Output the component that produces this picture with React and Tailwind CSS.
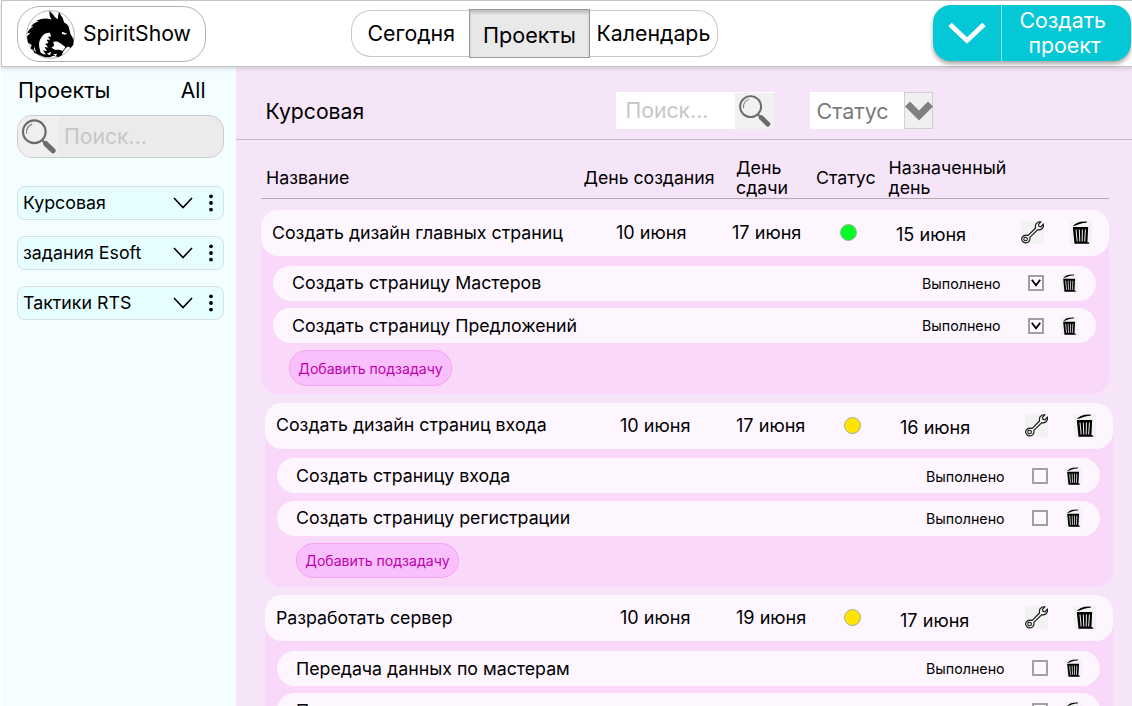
const projects = ["Курсовая", "задания Esoft", "Тактики RTS"];

const tasks = [
  {
    title: "Создать дизайн главных страниц",
    created: "10 июня",
    due: "17 июня",
    assigned: "15 июня",
    dot: "bg-[#00ff26]",
    shift: "ml-[25px]",
    addShift: "ml-[28px]",
    subtasks: [
      { title: "Создать страницу Мастеров", done: true },
      { title: "Создать страницу Предложений", done: true },
    ],
  },
  {
    title: "Создать дизайн страниц входа",
    created: "10 июня",
    due: "17 июня",
    assigned: "16 июня",
    dot: "bg-[#ffe500]",
    shift: "ml-[29px]",
    addShift: "ml-[31px]",
    subtasks: [
      { title: "Создать страницу входа", done: false },
      { title: "Создать страницу регистрации", done: false },
    ],
  },
  {
    title: "Разработать сервер",
    created: "10 июня",
    due: "19 июня",
    assigned: "17 июня",
    dot: "bg-[#ffe500]",
    shift: "ml-[29px]",
    addShift: "ml-[31px]",
    subtasks: [
      { title: "Передача данных по мастерам", done: false },
      { title: "Передача данных", done: false },
    ],
  },
];

function DragonLogo() {
  return (
    <svg viewBox="78 26 148 148" className="size-[49px] shrink-0">
      <circle cx="152" cy="100" r="72" fill="#fff" stroke="#8c8c8c" strokeWidth="2" />
      <path
        d="M84 124 L81 106 L92 94 L82 97 Q86 82 101 76 L93 76 Q103 63 118 61 L108 59 Q128 46 156 55 Q147 44 149 28 Q159 37 165 47 L174 54 Q174 42 178 31 Q182 42 189 50 L193 64 Q205 69 208 80 L212 98 L222 115 L221 131 L213 141 L206 136 L198 141 L190 152 L186 163 L176 168 L160 164 L150 169 L134 168 L118 162 L102 154 L100 146 L92 143 L95 132 Z"
        fill="#000"
      />
      <path
        d="M150 95 Q136 94 128 104 Q115 118 118 138 L122 154 L130 160 L138 160 L129 148 L141 150 L134 138 L145 139 L136 128 L146 126 L140 116 L151 116 L144 107 L154 106 Z"
        fill="#fff"
      />
      <path d="M160 122 L172 121 L184 128 L197 138 L189 150 L178 146 L165 146 L155 140 L163 133 Z" fill="#fff" />
      <path d="M141 158 L155 152 L150 163 Z M160 160 L172 158 L168 166 Z" fill="#fff" />
      <path d="M187 92 L203 98 L194 101 L186 97 Z" fill="#fff" />
      <path d="M103 136 Q100 148 108 154 L105 142 Z" fill="#fff" />
    </svg>
  );
}

function Magnifier({ className }) {
  return (
    <svg viewBox="0 0 39 37" className={className} fill="none">
      <circle cx="15.5" cy="14" r="10.8" stroke="#6b6b6b" strokeWidth="2" />
      <path d="M8.3 15.5 A7.8 7.8 0 0 1 13.5 6.6" stroke="#6b6b6b" strokeWidth="1" />
      <path d="M23 22 L27 26" stroke="#6b6b6b" strokeWidth="2" />
      <path d="M26.3 25.2 L33.3 32" stroke="#6b6b6b" strokeWidth="5" strokeLinecap="round" />
    </svg>
  );
}

function Wrench() {
  return (
    <svg viewBox="0 0 23 23" className="mb-px size-[23px] bg-[#f2f2f2]" fill="none" stroke="#111" strokeWidth="1.1">
      <path d="M7.2 14.4 L14.6 7 Q13.6 3 16.5 1.4 Q18.2 .4 19.8 .8 L17.4 3.4 L18 5.3 L20 5.8 L22.3 3.2 Q23 6 21 7.8 Q19 9.3 16.6 8.8 L8.8 16.4 Q9.6 19.8 7 21.3 Q4.4 22.7 2 20.8 Q-.3 18.5 1.4 15.9 Q3.5 13.3 7.2 14.4 Z" />
      <circle cx="4.6" cy="18" r="1.8" />
    </svg>
  );
}

function Trash({ className }) {
  return (
    <svg viewBox="0 0 22 23" className={className}>
      <rect width="22" height="23" fill="#f2f2f2" />
      <path d="M3 4.6 Q7 1 10.5 .7 L17 .4 L16.5 1.7 Q12 1.6 9 3.2 L4 5 Z" fill="#000" />
      <path d="M2.8 6 H18.2 L17.4 21.3 L19.2 21.6 V22.7 H4.5 Z" fill="#000" />
      <path d="M6 8.5 L7.2 20.5 M9.3 8.5 L9.8 20.5 M12.4 8.5 L12.2 20.5 M15.4 8.5 L14.7 20.5" stroke="#f2f2f2" strokeWidth="1" />
    </svg>
  );
}

function Checkbox({ checked }) {
  return (
    <span className="flex size-4 items-center justify-center border-2 border-[#a0a0a0] bg-white/40">
      {checked && (
        <svg viewBox="0 0 12 12" className="size-3 shrink-0" fill="none" stroke="#000" strokeWidth="1.8">
          <path d="M1.8 2.8 L6 8.3 L10.2 2.8" />
        </svg>
      )}
    </span>
  );
}

function Subtask({ title, done }) {
  return (
    <div className="mb-[7.2px] ml-3 flex h-[35.3px] w-[823px] items-center rounded-[17.6px] bg-[#fdf6fe]">
      <span className="w-[629.5px] pt-px pl-[19px]">{title}</span>
      <span className="w-[125.5px] pt-px pl-[19.5px] text-[14.25px]">Выполнено</span>
      <span className="w-[33px]">
        <Checkbox checked={done} />
      </span>
      <Trash className="h-[18px] w-[17px]" />
    </div>
  );
}

function TaskCard({ task }) {
  return (
    <section className={`${task.shift} h-[184.3px] w-[848px] shrink-0 rounded-[17px] bg-[#f9d8f9]`}>
      <div className="mb-[9.5px] flex h-[46px] items-center rounded-[17px] bg-[#fdf6fe]">
        <span className="w-[344px] pl-[11px]">{task.title}</span>
        <span className="w-[116px] pb-px pl-[11px] text-[18.1px]">{task.created}</span>
        <span className="w-[119px] pb-px pl-[11px] text-[18.1px]">{task.due}</span>
        <span className={`${task.dot} mb-px size-[17px] rounded-full border border-[#aaa]`} />
        <span className="w-[164px] pt-1 pl-[39px] text-[18.1px]">{task.assigned}</span>
        <span className="w-[49px]">
          <Wrench />
        </span>
        <Trash className="mb-px h-[23px] w-[22px]" />
      </div>
      {task.subtasks.map((s) => (
        <Subtask key={s.title} {...s} />
      ))}
      <button
        className={`${task.addShift} flex h-[35.3px] w-[163px] items-center justify-center rounded-[17.6px] border border-[#f8a4ee] bg-[#f9c0fd] text-[14.1px] text-[#bf00ac]`}
      >
        Добавить подзадачу
      </button>
    </section>
  );
}

function Sidebar() {
  return (
    <aside className="ml-px w-[235px] shrink-0 bg-[#f4fdff] pl-4">
      <div className="flex h-[47px] items-center justify-between pr-[30.5px] pl-px text-[21.5px]">
        <span>Проекты</span>
        <span className="text-[21px]">All</span>
      </div>
      <div className="mt-px flex h-[43px] w-[207px] items-center overflow-hidden rounded-[15px] border border-[#cbcbcb] bg-[#ebebeb]">
        <span className="flex h-full w-[41px] shrink-0 items-center bg-[#efefef]">
          <Magnifier className="h-[41px] w-[41px] shrink-0" />
        </span>
        <span className="pl-[5px] text-[21.2px] text-[#c6c6c6]">Поиск...</span>
      </div>
      <ul className="mt-[28px] flex w-[207px] flex-col gap-4">
        {projects.map((name) => (
          <li
            key={name}
            className="flex h-[34px] items-center rounded-lg border border-[#d9e0e2] bg-[#e6feff] pl-[5px] text-[17.8px]"
          >
            <span className="grow pt-px">{name}</span>
            <svg viewBox="0 0 20 12" className="h-3 w-5" fill="none" stroke="#000" strokeWidth="1.6">
              <path d="M1 1 L10 10.5 L19 1" />
            </svg>
            <svg viewBox="0 0 4 18" className="mr-[10px] ml-4 h-[18px] w-1">
              <circle cx="2" cy="2.3" r="1.9" />
              <circle cx="2" cy="9" r="1.9" />
              <circle cx="2" cy="15.6" r="1.9" />
            </svg>
          </li>
        ))}
      </ul>
    </aside>
  );
}

function Header() {
  return (
    <header className="z-10 ml-px flex h-[67px] shrink-0 items-start border border-r-0 border-[#c4c4c4] bg-white text-[21.3px] shadow-[0_2px_4px_rgba(0,0,0,0.14)]">
      <div className="mt-[5px] ml-[15px] flex h-[56px] w-[189px] items-center rounded-[23px] border border-[#b0b0b0] pl-[7.5px]">
        <DragonLogo />
        <span className="pl-[8.5px] text-[21.2px]">SpiritShow</span>
      </div>
      <nav className="mt-2 ml-[145px] flex h-[49px] w-[367px] items-center">
        <span className="flex h-[47px] w-[118px] items-center rounded-l-[20px] border border-r-0 border-[#c8c8c8] pl-[15.5px]">
          Сегодня
        </span>
        <span className="flex h-[49px] w-[121px] items-center border border-[#999] bg-[#e9e9e9] pt-[3px] pl-[13px] text-[21.6px] shadow-[inset_0_3px_3px_rgba(0,0,0,0.18)]">
          Проекты
        </span>
        <span className="flex h-[47px] w-[128px] items-center rounded-r-[20px] border border-l-0 border-[#c8c8c8] pl-[6.5px]">
          Календарь
        </span>
      </nav>
      <button className="mt-1 ml-[215px] flex h-[56px] w-[198px] shrink-0 rounded-[18px] bg-[#05c8d6] text-left leading-[25px] text-white shadow-[0_3px_4px_rgba(0,0,0,0.35)]">
        <span className="flex h-full w-[69px] items-center justify-center border-r border-[#8fe4ea]">
          <svg viewBox="0 0 38 24" className="h-6 w-[38px]" fill="none" stroke="#fff" strokeWidth="4.8">
            <path d="M2 3.5 L19 19.5 L36 3.5" />
          </svg>
        </span>
        <span className="flex flex-col pt-[3px] pl-[17.5px]">
          <span>Создать</span>
          <span className="pl-[9px]">проект</span>
        </span>
      </button>
    </header>
  );
}

export default function App() {
  return (
    <div className="flex h-[706px] w-[1132px] flex-col overflow-hidden bg-white font-['Inter',sans-serif] text-black">
      <Header />
      <div className="flex min-h-0 grow">
        <Sidebar />
        <main className="flex w-[896px] flex-col overflow-hidden bg-[#f6e5f9] text-[17.75px]">
          <div className="flex h-[73px] shrink-0 items-start border-b border-[#c3b6c6] pt-[25px] text-[21.2px]">
            <h1 className="w-[380px] pl-[29.5px] leading-[39px]">Курсовая</h1>
            <div className="flex h-[37px] w-[158px] items-center bg-white">
              <span className="w-[119px] pt-px pl-[9.5px] text-[#c6c6c6]">Поиск...</span>
              <span className="mt-px h-9 w-[39px] bg-[#f1f1f1]">
                <Magnifier className="h-9 w-[39px]" />
              </span>
            </div>
            <div className="ml-9 flex h-[37px] w-[123px] items-center bg-white">
              <span className="w-[94px] pt-px pl-[6.5px] text-[21.5px] text-[#7a7a7a]">Статус</span>
              <span className="flex h-full w-[29px] items-center justify-center border border-[#cfcfcf] bg-[#f0f0f0]">
                <svg viewBox="0 0 28 22" className="h-[22px] w-7 shrink-0" fill="none" stroke="#808080" strokeWidth="7">
                  <path d="M2.5 4 L14 15.5 L25.5 4" />
                </svg>
              </span>
            </div>
          </div>
          <div className="mb-[11px] ml-[25px] flex h-[59px] w-[848px] shrink-0 items-center border-b border-[#b2aab5] pt-[17px] text-[17.8px] leading-[19.4px]">
            <span className="w-[322.5px] pl-[5px]">Название</span>
            <span className="w-[152.5px] text-[17.65px]">День создания</span>
            <span className="w-[80px]">
              День
              <br />
              сдачи
            </span>
            <span className="w-[72.5px]">Статус</span>
            <span>
              Назначенный
              <br />
              день
            </span>
          </div>
          <div className="flex flex-col gap-[8.3px]">
            {tasks.map((t) => (
              <TaskCard key={t.title} task={t} />
            ))}
          </div>
        </main>
      </div>
    </div>
  );
}
